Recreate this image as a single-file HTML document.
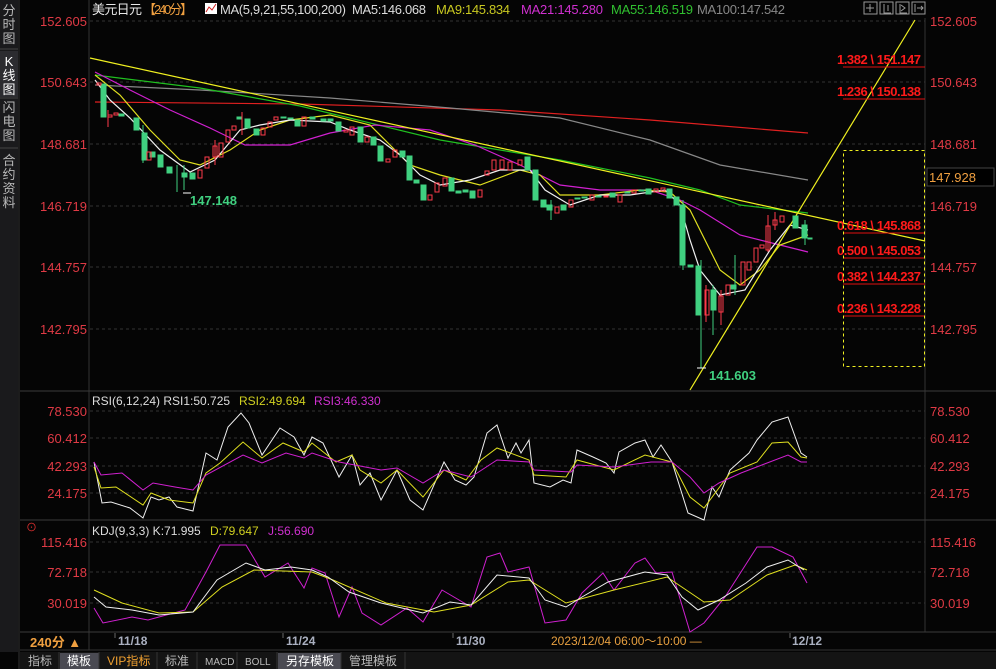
<!DOCTYPE html>
<html><head><meta charset="utf-8"><style>
body{margin:0;background:#000;width:996px;height:669px;overflow:hidden;font-family:"Liberation Sans","Noto Sans CJK SC",sans-serif}
svg{position:absolute;left:0;top:0}
text{font-family:"Liberation Sans","Noto Sans CJK SC",sans-serif}
</style></head><body>
<svg width="996" height="669" viewBox="0 0 996 669">
<rect width="996" height="669" fill="#050505"/>
<rect x="0" y="0" width="18" height="652" fill="#1a1a1c"/>
<rect x="0" y="51" width="18" height="46" fill="#2c2c30"/>
<g fill="#b8b8b8" font-size="13" text-anchor="middle">
<text x="9" y="15">分</text><text x="9" y="29">时</text><text x="9" y="43">图</text>
<text x="9" y="66" fill="#fff">K</text><text x="9" y="80" fill="#fff">线</text><text x="9" y="94" fill="#fff">图</text>
<text x="9" y="112">闪</text><text x="9" y="126">电</text><text x="9" y="140">图</text>
<text x="9" y="165">合</text><text x="9" y="179">约</text><text x="9" y="193">资</text><text x="9" y="207">料</text>
</g>
<line x1="0" y1="49" x2="18" y2="49" stroke="#444"/><line x1="0" y1="98" x2="18" y2="98" stroke="#444"/><line x1="0" y1="148" x2="18" y2="148" stroke="#444"/>
<line x1="19" y1="0" x2="19" y2="669" stroke="#333"/>
<line x1="89" y1="0" x2="89" y2="650" stroke="#333"/>
<line x1="925" y1="18" x2="925" y2="632" stroke="#333"/>
<g stroke="#333" stroke-dasharray="3,3">
<line x1="90" y1="21" x2="925" y2="21"/><line x1="90" y1="82" x2="925" y2="82"/><line x1="90" y1="144" x2="925" y2="144"/><line x1="90" y1="206" x2="925" y2="206"/><line x1="90" y1="267" x2="925" y2="267"/><line x1="90" y1="329" x2="925" y2="329"/>
<line x1="90" y1="411" x2="925" y2="411"/><line x1="90" y1="438" x2="925" y2="438"/><line x1="90" y1="466" x2="925" y2="466"/><line x1="90" y1="493" x2="925" y2="493"/>
<line x1="90" y1="542" x2="925" y2="542"/><line x1="90" y1="572" x2="925" y2="572"/><line x1="90" y1="603" x2="925" y2="603"/>
</g>
<line x1="20" y1="391" x2="996" y2="391" stroke="#3a3a3a"/>
<line x1="20" y1="520" x2="996" y2="520" stroke="#3a3a3a"/>
<line x1="20" y1="632" x2="996" y2="632" stroke="#3a3a3a"/>
<g fill="#e03a45" font-size="13">
<g text-anchor="end"><text x="87" y="26">152.605</text><text x="87" y="87">150.643</text><text x="87" y="149">148.681</text><text x="87" y="211">146.719</text><text x="87" y="272">144.757</text><text x="87" y="334">142.795</text>
<text x="87" y="416">78.530</text><text x="87" y="443">60.412</text><text x="87" y="471">42.293</text><text x="87" y="498">24.175</text>
<text x="87" y="547">115.416</text><text x="87" y="577">72.718</text><text x="87" y="608">30.019</text></g>
<text x="930" y="26">152.605</text><text x="930" y="87">150.643</text><text x="930" y="149">148.681</text><text x="930" y="211">146.719</text><text x="930" y="272">144.757</text><text x="930" y="334">142.795</text>
<text x="930" y="416">78.530</text><text x="930" y="443">60.412</text><text x="930" y="471">42.293</text><text x="930" y="498">24.175</text>
<text x="930" y="547">115.416</text><text x="930" y="577">72.718</text><text x="930" y="608">30.019</text>
</g>
<rect x="927" y="168" width="67" height="18" fill="#000" stroke="#444"/>
<text x="929" y="182" fill="#f0a040" font-size="13">147.928</text>
<g font-size="13">
<text x="92" y="14" fill="#e8e8e8" textLength="50">美元日元</text><text x="143" y="14" fill="#f0a040" textLength="50">【240分】</text>
<rect x="205" y="3" width="12" height="11" fill="#fff"/><path d="M206 12 L209 7 L212 10 L216 4" stroke="#d02020" fill="none"/>
<text x="220" y="14" fill="#ddd" textLength="126">MA(5,9,21,55,100,200)</text>
<text x="352" y="14" fill="#ddd" textLength="74">MA5:146.068</text>
<text x="436" y="14" fill="#c8c820" textLength="74">MA9:145.834</text>
<text x="521" y="14" fill="#d030d0" textLength="82">MA21:145.280</text>
<text x="611" y="14" fill="#30c030" textLength="82">MA55:146.519</text>
<text x="697" y="14" fill="#888" textLength="88">MA100:147.542</text>
</g>
<g stroke="#999" fill="none"><rect x="864" y="2" width="13" height="12"/><rect x="880" y="2" width="13" height="12"/><rect x="896" y="2" width="13" height="12"/><rect x="912" y="2" width="13" height="12"/>
<path d="M870 4v8M866 8h8M884 4v9h7M888 5v6M900 4v9h7M901 5l4 3-4 3M915 4v8M917 8h6M921 6l2 2-2 2"/></g>
<g fill="none" stroke-width="1.2">
<polyline stroke="#e02020" points="95,102 300,104 500,110 650,120 808,133"/>
<polyline stroke="#888" points="95,85 200,90 330,98 450,108 560,118 650,140 720,165 808,180"/>
<polyline stroke="#20c020" points="95,75 200,88 300,106 440,140 560,160 650,178 700,190 740,205 808,213"/>
<polyline stroke="#d020d0" points="95,72 130,90 170,110 210,128 245,145 290,145 330,133 375,125 430,130 475,145 520,165 560,185 600,190 650,190 680,200 700,210 740,235 780,245 808,252"/>
<polyline stroke="#e0e020" points="95,75 120,95 150,130 180,160 200,165 230,150 260,130 290,120 330,115 370,125 390,145 410,165 440,175 480,185 520,170 540,175 560,195 600,195 640,190 670,192 690,210 705,240 720,270 740,285 760,270 780,245 808,235"/>
<polyline stroke="#f0f0f0" points="95,80 110,100 130,118 160,150 190,172 215,160 240,130 260,125 290,120 330,122 350,130 380,140 400,155 420,175 440,185 470,180 500,170 530,170 545,190 570,205 600,195 630,195 665,190 680,205 690,240 700,270 720,295 745,290 770,250 790,225 808,230"/>
<line x1="90" y1="58" x2="925" y2="241" stroke="#f0f020"/>
<line x1="690" y1="390" x2="915" y2="20" stroke="#f0f020"/>
</g>
<g>
<g fill="#40d080" stroke="#40d080">
<rect x="101" y="84" width="5" height="33"/><rect x="119" y="114" width="5" height="2"/><rect x="134" y="118" width="5" height="12"/><rect x="142" y="133" width="5" height="27"/><rect x="150" y="152" width="5" height="5"/><rect x="158" y="155" width="5" height="12"/><rect x="167" y="167" width="5" height="6"/><rect x="182" y="173" width="5" height="4"/><rect x="190" y="173" width="5" height="6"/><rect x="237" y="117" width="5" height="2"/><rect x="245" y="119" width="5" height="9"/><rect x="254" y="129" width="5" height="6"/><rect x="281" y="117" width="5" height="1"/><rect x="288" y="118" width="5" height="1"/><rect x="295" y="120" width="5" height="6"/><rect x="310" y="117" width="5" height="2"/><rect x="321" y="119" width="5" height="2"/><rect x="328" y="119" width="5" height="2"/><rect x="336" y="122" width="5" height="9"/><rect x="358" y="127" width="5" height="15"/><rect x="371" y="137" width="5" height="8"/><rect x="378" y="146" width="5" height="15"/><rect x="400" y="151" width="5" height="6"/><rect x="407" y="156" width="5" height="24"/><rect x="414" y="180" width="5" height="3"/><rect x="421" y="185" width="5" height="15"/><rect x="449" y="178" width="5" height="13"/><rect x="456" y="191" width="5" height="2"/><rect x="463" y="190" width="5" height="2"/><rect x="470" y="191" width="5" height="7"/><rect x="525" y="157" width="5" height="13"/><rect x="533" y="170" width="5" height="30"/><rect x="541" y="200" width="5" height="7"/><rect x="547" y="205" width="5" height="5"/><rect x="561" y="205" width="5" height="5"/><rect x="575" y="198" width="5" height="1"/><rect x="582" y="197" width="5" height="1"/><rect x="596" y="196" width="5" height="1"/><rect x="610" y="193" width="5" height="4"/><rect x="625" y="192" width="5" height="1"/><rect x="639" y="190" width="5" height="1"/><rect x="646" y="189" width="5" height="5"/><rect x="667" y="189" width="5" height="9"/><rect x="674" y="197" width="5" height="8"/><rect x="680" y="205" width="5" height="60"/><rect x="688" y="265" width="5" height="2"/><rect x="696" y="266" width="5" height="49"/><rect x="711" y="290" width="5" height="20"/><rect x="731" y="285" width="5" height="4"/><rect x="793" y="216" width="5" height="12"/><rect x="802" y="225" width="5" height="13"/><rect x="808" y="238" width="4" height="1"/>
</g>
<g fill="none" stroke="#ff3a4a">
<rect x="97" y="83" width="4" height="2"/><rect x="108" y="115" width="4" height="2"/><rect x="114" y="113" width="4" height="2"/><rect x="147" y="152" width="4" height="8"/><rect x="198" y="170" width="4" height="8"/><rect x="205" y="157" width="4" height="11"/><rect x="213" y="146" width="4" height="11"/><rect x="219" y="143" width="4" height="14"/><rect x="226" y="130" width="4" height="12"/><rect x="232" y="126" width="4" height="4"/><rect x="261" y="128" width="4" height="7"/><rect x="268" y="122" width="4" height="5"/><rect x="274" y="117" width="4" height="3"/><rect x="302" y="117" width="4" height="9"/><rect x="344" y="130" width="4" height="2"/><rect x="350" y="127" width="4" height="8"/><rect x="365" y="137" width="4" height="5"/><rect x="386" y="159" width="4" height="3"/><rect x="393" y="150" width="4" height="7"/><rect x="428" y="195" width="4" height="5"/><rect x="435" y="183" width="4" height="9"/><rect x="443" y="178" width="4" height="8"/><rect x="478" y="190" width="4" height="7"/><rect x="485" y="171" width="4" height="4"/><rect x="492" y="160" width="4" height="10"/><rect x="500" y="160" width="4" height="9"/><rect x="508" y="162" width="4" height="8"/><rect x="518" y="160" width="4" height="5"/><rect x="555" y="207" width="4" height="6"/><rect x="569" y="200" width="4" height="7"/><rect x="590" y="195" width="4" height="5"/><rect x="604" y="196" width="4" height="1"/><rect x="618" y="195" width="4" height="7"/><rect x="632" y="190" width="4" height="3"/><rect x="654" y="189" width="4" height="3"/><rect x="661" y="188" width="4" height="3"/><rect x="705" y="290" width="4" height="25"/><rect x="719" y="296" width="4" height="16"/><rect x="726" y="285" width="4" height="10"/><rect x="741" y="262" width="4" height="23"/><rect x="747" y="262" width="4" height="8"/><rect x="754" y="248" width="4" height="14"/><rect x="760" y="245" width="4" height="3"/><rect x="766" y="226" width="4" height="24"/><rect x="773" y="220" width="4" height="5"/><rect x="780" y="216" width="4" height="6"/>
</g>
<g stroke="#40d080"><line x1="143" y1="125" x2="143" y2="163"/><line x1="177" y1="165" x2="177" y2="192"/><line x1="184" y1="165" x2="184" y2="190"/><line x1="701" y1="260" x2="701" y2="368"/><line x1="713" y1="285" x2="713" y2="335"/><line x1="683" y1="200" x2="683" y2="270"/><line x1="735" y1="255" x2="735" y2="295"/><line x1="551" y1="200" x2="551" y2="220"/><line x1="805" y1="220" x2="805" y2="245"/></g>
<g stroke="#ff3a4a"><line x1="706" y1="285" x2="706" y2="322"/><line x1="721" y1="290" x2="721" y2="325"/><line x1="768" y1="215" x2="768" y2="252"/><line x1="775" y1="212" x2="775" y2="230"/><line x1="108" y1="110" x2="108" y2="127"/><line x1="215" y1="140" x2="215" y2="165"/><line x1="242" y1="112" x2="242" y2="135"/></g>
<line x1="183" y1="193" x2="191" y2="193" stroke="#fff"/><line x1="697" y1="368" x2="706" y2="368" stroke="#fff"/>
</g>
<text x="190" y="205" fill="#40d080" font-size="13" font-weight="bold">147.148</text>
<text x="709" y="380" fill="#40d080" font-size="13" font-weight="bold">141.603</text>
<g stroke="#e01010"><line x1="843" y1="67" x2="925" y2="67"/><line x1="843" y1="99" x2="925" y2="99"/><line x1="843" y1="233" x2="925" y2="233"/><line x1="843" y1="258" x2="925" y2="258"/><line x1="843" y1="284" x2="925" y2="284"/><line x1="843" y1="316" x2="925" y2="316"/></g>
<g fill="#ff1a1a" font-size="13" font-weight="bold">
<text x="837" y="64" textLength="84">1.382 \ 151.147</text><text x="837" y="96" textLength="84">1.236 \ 150.138</text><text x="837" y="230" textLength="84">0.618 \ 145.868</text><text x="837" y="255" textLength="84">0.500 \ 145.053</text><text x="837" y="281" textLength="84">0.382 \ 144.237</text><text x="837" y="313" textLength="84">0.236 \ 143.228</text>
</g>
<rect x="843.5" y="150.5" width="81" height="216" fill="none" stroke="#f0f020" stroke-dasharray="3,3"/>
<g font-size="12"><text x="92" y="405" fill="#ddd">RSI(6,12,24) RSI1:50.725</text><text x="239" y="405" fill="#d0d020">RSI2:49.694</text><text x="314" y="405" fill="#d030d0">RSI3:46.330</text></g>
<g fill="none" stroke-width="1">
<polyline stroke="#f0f0f0" points="94,462 102,503 111,502 130,508 143,518 151,497 159,500 169,497 177,507 193,511 206,453 217,460 228,427 241,413 249,423 262,455 280,428 294,437 304,455 312,437 323,443 339,477 352,455 360,485 370,473 381,500 397,470 410,500 423,510 444,462 455,480 466,485 474,477 487,433 497,425 508,458 516,443 521,453 529,440 534,483 550,487 563,480 571,483 577,450 593,457 606,463 614,473 619,452 635,443 645,440 653,457 661,445 672,462 688,513 704,520 712,487 719,497 730,470 749,453 757,440 772,422 788,417 801,453 807,457"/>
<polyline stroke="#e0e020" points="94,467 101,488 116,487 143,505 151,493 169,500 193,503 206,473 220,463 243,442 262,458 283,443 304,452 312,443 336,462 352,455 360,470 381,483 397,470 423,497 444,470 466,480 481,460 497,448 529,460 534,475 566,477 577,460 614,470 645,455 672,462 690,497 704,508 730,473 757,462 772,443 788,442 801,457 807,458"/>
<polyline stroke="#d020d0" points="94,462 101,475 122,473 143,490 153,483 175,487 193,490 206,475 243,455 262,463 286,453 304,458 312,453 339,462 381,470 397,468 423,483 444,470 471,477 497,460 529,462 534,470 571,472 577,465 614,467 651,462 672,462 690,477 704,493 719,483 741,473 788,455 801,462 807,462"/>
</g>
<text x="26" y="531" fill="#e03030" font-size="11">⊙</text>
<g font-size="12"><text x="92" y="535" fill="#ddd">KDJ(9,3,3) K:71.995</text><text x="210" y="535" fill="#d0d020">D:79.647</text><text x="268" y="535" fill="#d030d0">J:56.690</text></g>
<g fill="none" stroke-width="1">
<polyline stroke="#d020d0" points="94,608 103,623 132,617 148,620 185,610 206,572 220,545 246,545 265,577 288,563 304,588 312,568 325,573 339,617 352,587 362,613 381,625 407,608 423,622 442,590 471,607 487,557 500,553 508,572 529,567 545,623 566,620 582,593 603,573 614,590 635,563 645,558 656,573 672,572 690,632 704,623 725,597 757,547 772,547 793,557 807,583"/>
<polyline stroke="#e0e020" points="94,590 122,603 159,613 193,612 222,587 254,570 312,572 333,580 386,603 434,612 471,605 508,582 529,580 566,603 614,590 667,577 704,602 730,600 767,575 795,565 807,570"/>
<polyline stroke="#f0f0f0" points="94,597 106,607 132,610 159,615 193,612 217,580 246,563 265,570 291,567 312,570 328,577 349,592 381,603 402,608 423,613 450,602 471,605 497,575 529,578 545,600 566,607 582,597 608,582 645,572 667,575 682,597 698,610 719,600 746,583 767,567 788,560 804,570"/>
</g>
<line x1="20" y1="650" x2="996" y2="650" stroke="#333"/>
<text x="30" y="647" fill="#f0a040" font-size="13" font-weight="bold">240分 ▲</text>
<g stroke="#666"><line x1="115" y1="633" x2="115" y2="638"/><line x1="283" y1="633" x2="283" y2="638"/><line x1="453" y1="633" x2="453" y2="638"/><line x1="790" y1="633" x2="790" y2="638"/></g>
<g fill="#aab0c0" font-size="12" font-weight="bold"><text x="118" y="645">11/18</text><text x="286" y="645">11/24</text><text x="456" y="645">11/30</text><text x="792" y="645">12/12</text></g>
<text x="551" y="645" fill="#e8a040" font-size="12">2023/12/04 06:00～10:00 —</text>
<rect x="20" y="652" width="976" height="17" fill="#141414"/>
<rect x="60" y="653" width="39" height="16" fill="#4a4a52"/>
<rect x="278" y="653" width="63" height="16" fill="#4a4a52"/>
<g stroke="#333"><line x1="59" y1="652" x2="59" y2="669"/><line x1="99" y1="652" x2="99" y2="669"/><line x1="157" y1="652" x2="157" y2="669"/><line x1="197" y1="652" x2="197" y2="669"/><line x1="237" y1="652" x2="237" y2="669"/><line x1="277" y1="652" x2="277" y2="669"/><line x1="341" y1="652" x2="341" y2="669"/><line x1="405" y1="652" x2="405" y2="669"/></g>
<g font-size="12" fill="#bbb"><text x="28" y="665">指标</text><text x="67" y="665" fill="#fff">模板</text><text x="107" y="665" fill="#f0a030">VIP指标</text><text x="165" y="665">标准</text><text x="205" y="665" font-family="Liberation Mono" font-size="10">MACD</text><text x="245" y="665" font-family="Liberation Mono" font-size="10">BOLL</text><text x="286" y="665" fill="#fff">另存模板</text><text x="349" y="665">管理模板</text></g>
</svg>
</body></html>
